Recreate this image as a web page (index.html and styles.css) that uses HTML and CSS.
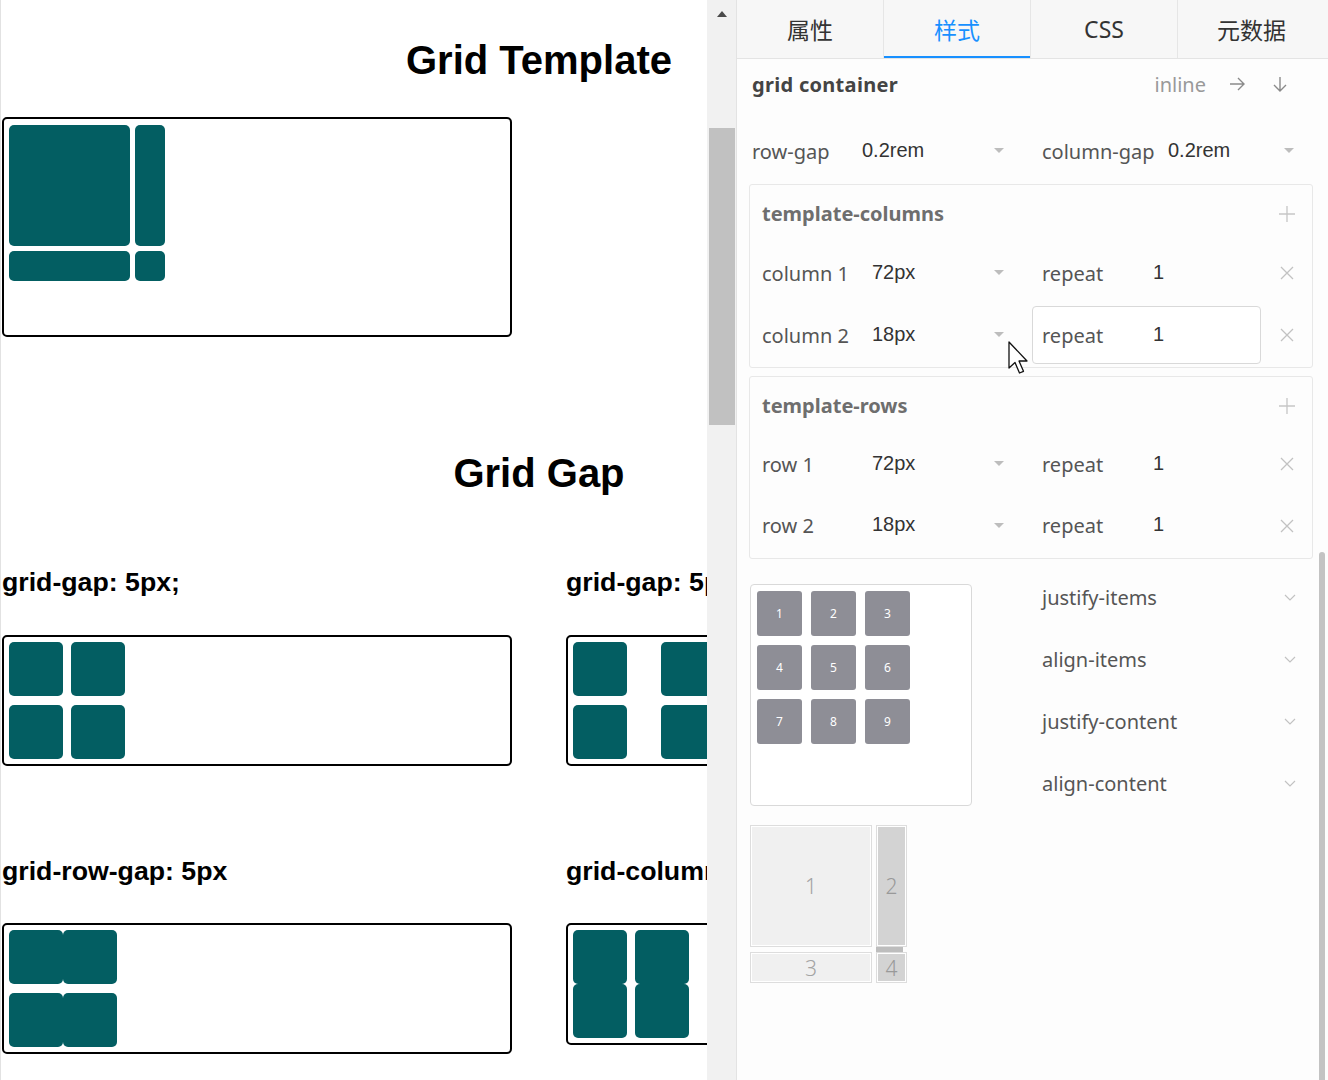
FILE: index.html
```html
<!DOCTYPE html>
<html lang="zh">
<head>
<meta charset="utf-8">
<title>Grid editor</title>
<link rel="stylesheet" href="styles.css">
</head>
<body>
<div class="app">
  <div class="preview">
    <div class="page">
      <h1 class="title t1">Grid Template</h1>
      <div class="demo demo-tpl">
        <div class="it"></div><div class="it"></div><div class="it"></div><div class="it"></div>
      </div>
      <h1 class="title t2">Grid Gap</h1>
      <div class="cases">
        <div class="case">
          <h3 class="case-h">grid-gap: 5px;</h3>
          <div class="demo demo-sq g-a"><div class="it"></div><div class="it"></div><div class="it"></div><div class="it"></div></div>
        </div>
        <div class="case">
          <h3 class="case-h">grid-gap: 5px 20px;</h3>
          <div class="demo demo-sq g-b"><div class="it"></div><div class="it"></div><div class="it"></div><div class="it"></div></div>
        </div>
        <div class="case">
          <h3 class="case-h">grid-row-gap: 5px</h3>
          <div class="demo demo-sq g-c"><div class="it"></div><div class="it"></div><div class="it"></div><div class="it"></div></div>
        </div>
        <div class="case">
          <h3 class="case-h">grid-column-gap: 5px</h3>
          <div class="demo demo-sq g-d"><div class="it"></div><div class="it"></div><div class="it"></div><div class="it"></div></div>
        </div>
      </div>
    </div>
  </div>

  <div class="vscroll">
    <div class="vs-arrow"></div>
    <div class="vs-thumb"></div>
  </div>

  <div class="panel">
    <div class="tabs">
      <div class="tab">属性</div>
      <div class="tab active">样式</div>
      <div class="tab">CSS</div>
      <div class="tab">元数据</div>
    </div>
    <div class="pbody">
      <div class="content">
        <div class="hdr">
          <span class="hdr-t">grid container</span>
          <span class="hdr-inline">inline</span>
          <svg class="ico-arrow" width="16" height="16" viewBox="0 0 16 16"><path d="M1 8H15M9 2L15 8L9 14" fill="none" stroke="#8a8a8a" stroke-width="1.4"/></svg>
          <svg class="ico-arrow ico-down" width="16" height="16" viewBox="0 0 16 16"><path d="M8 1V15M2 9L8 15L14 9" fill="none" stroke="#8a8a8a" stroke-width="1.4"/></svg>
        </div>

        <div class="gaprow">
          <div class="grp grp-l">
            <span class="lbl">row-gap</span>
            <span class="val">0.2rem</span>
            <svg class="caret" width="10" height="6" viewBox="0 0 10 6"><path d="M0 0H10L5 5Z" fill="#bdbdbd"/></svg>
          </div>
          <div class="grp grp-r">
            <span class="lbl lbl-cg">column-gap</span>
            <span class="val">0.2rem</span>
            <svg class="caret" width="10" height="6" viewBox="0 0 10 6"><path d="M0 0H10L5 5Z" fill="#bdbdbd"/></svg>
          </div>
        </div>

        <div class="sect">
          <div class="sect-h">
            <span class="sect-t">template-columns</span>
            <span class="icell"><svg width="18" height="18" viewBox="0 0 18 18"><path d="M9 1V17M1 9H17" fill="none" stroke="#c6c6c6" stroke-width="1.3"/></svg></span>
          </div>
          <div class="srow h60">
            <div class="grp-l2"><span class="lbl">column 1</span><span class="val">72px</span><svg class="caret" width="10" height="6" viewBox="0 0 10 6"><path d="M0 0H10L5 5Z" fill="#bdbdbd"/></svg></div>
            <div class="rep"><span class="lbl rep-l">repeat</span><span class="val">1</span></div>
            <span class="icell"><svg width="14" height="14" viewBox="0 0 14 14"><path d="M1 1L13 13M13 1L1 13" fill="none" stroke="#c2c2c2" stroke-width="1.3"/></svg></span>
          </div>
          <div class="srow h64">
            <div class="grp-l2"><span class="lbl">column 2</span><span class="val">18px</span><svg class="caret" width="10" height="6" viewBox="0 0 10 6"><path d="M0 0H10L5 5Z" fill="#bdbdbd"/></svg></div>
            <div class="rep focus"><span class="lbl rep-l">repeat</span><span class="val">1</span></div>
            <span class="icell"><svg width="14" height="14" viewBox="0 0 14 14"><path d="M1 1L13 13M13 1L1 13" fill="none" stroke="#c2c2c2" stroke-width="1.3"/></svg></span>
          </div>
        </div>

        <div class="sect sect2">
          <div class="sect-h">
            <span class="sect-t">template-rows</span>
            <span class="icell"><svg width="18" height="18" viewBox="0 0 18 18"><path d="M9 1V17M1 9H17" fill="none" stroke="#c6c6c6" stroke-width="1.3"/></svg></span>
          </div>
          <div class="srow h58">
            <div class="grp-l2"><span class="lbl">row 1</span><span class="val">72px</span><svg class="caret" width="10" height="6" viewBox="0 0 10 6"><path d="M0 0H10L5 5Z" fill="#bdbdbd"/></svg></div>
            <div class="rep"><span class="lbl rep-l">repeat</span><span class="val">1</span></div>
            <span class="icell"><svg width="14" height="14" viewBox="0 0 14 14"><path d="M1 1L13 13M13 1L1 13" fill="none" stroke="#c2c2c2" stroke-width="1.3"/></svg></span>
          </div>
          <div class="srow h65">
            <div class="grp-l2"><span class="lbl">row 2</span><span class="val">18px</span><svg class="caret" width="10" height="6" viewBox="0 0 10 6"><path d="M0 0H10L5 5Z" fill="#bdbdbd"/></svg></div>
            <div class="rep"><span class="lbl rep-l">repeat</span><span class="val">1</span></div>
            <span class="icell"><svg width="14" height="14" viewBox="0 0 14 14"><path d="M1 1L13 13M13 1L1 13" fill="none" stroke="#c2c2c2" stroke-width="1.3"/></svg></span>
          </div>
        </div>

        <div class="align">
          <div class="mini">
            <div class="mc">1</div><div class="mc">2</div><div class="mc">3</div>
            <div class="mc">4</div><div class="mc">5</div><div class="mc">6</div>
            <div class="mc">7</div><div class="mc">8</div><div class="mc">9</div>
          </div>
          <div class="props">
            <div class="prop"><span>justify-items</span><svg width="12" height="7" viewBox="0 0 12 7"><path d="M1 1L6 6L11 1" fill="none" stroke="#c2c2c2" stroke-width="1.2"/></svg></div>
            <div class="prop"><span>align-items</span><svg width="12" height="7" viewBox="0 0 12 7"><path d="M1 1L6 6L11 1" fill="none" stroke="#c2c2c2" stroke-width="1.2"/></svg></div>
            <div class="prop"><span>justify-content</span><svg width="12" height="7" viewBox="0 0 12 7"><path d="M1 1L6 6L11 1" fill="none" stroke="#c2c2c2" stroke-width="1.2"/></svg></div>
            <div class="prop"><span>align-content</span><svg width="12" height="7" viewBox="0 0 12 7"><path d="M1 1L6 6L11 1" fill="none" stroke="#c2c2c2" stroke-width="1.2"/></svg></div>
          </div>
        </div>

        <div class="tracks">
          <div class="trk-hl"></div>
          <div class="tc c1">1</div>
          <div class="tc c2">2</div>
          <div class="tc c3">3</div>
          <div class="tc c4">4</div>
        </div>
      </div>
      <div class="pscroll"><div class="ps-thumb"></div></div>
    </div>
  </div>

  <svg class="cursor" width="22" height="34" viewBox="0 0 22 34"><path d="M1 1V27L7 21.5L11.5 32L15.5 30.3L11 20H19Z" fill="#fff" stroke="#111" stroke-width="1.3" stroke-linejoin="round"/></svg>
</div>
</body>
</html>
```
FILE: styles.css
```css
html, body {
  margin: 0;
  padding: 0;
  background: #fff;
}
body {
  width: 1328px;
  height: 1080px;
  overflow: hidden;
}
.app {
  position: relative;
  display: flex;
  width: 1328px;
  height: 1080px;
}

/* ---------- left preview ---------- */
.preview {
  width: 707px;
  flex: none;
  height: 1080px;
  overflow: hidden;
  box-sizing: border-box;
  border-left: 1px solid #e2e2e2;
  background: #fff;
}
.page {
  width: 1074px;
  margin-left: 1px;
  font-family: "Liberation Sans", Arial, sans-serif;
  color: #000;
}
.title {
  margin: 0;
  font-size: 40px;
  line-height: 48px;
  font-weight: bold;
  text-align: center;
}
.t1 { padding-top: 36px; margin-bottom: 33px; }
.t2 { margin-top: 112px; }
.demo {
  width: 510px;
  box-sizing: border-box;
  border: 2px solid #000;
  border-radius: 5px;
  display: grid;
  align-content: start;
  background: #fff;
}
.demo .it {
  background: #035e62;
  border-radius: 5px;
}
.demo-tpl {
  height: 220px;
  padding: 6px 5px;
  grid-template-columns: 121px 30px;
  grid-template-rows: 121px 30px;
  gap: 5px;
}
.cases {
  margin-top: 69px;
  display: grid;
  grid-template-columns: 510px 510px;
  column-gap: 54px;
  row-gap: 89px;
}
.case {
  display: flex;
  flex-direction: column;
}
.case-h {
  margin: 0 0 37px;
  font-size: 26.7px;
  line-height: 32px;
  font-weight: bold;
  white-space: nowrap;
}
.cases .case:nth-child(n+3) .case-h { margin-bottom: 36px; }
.demo-sq {
  padding: 5px;
  grid-template-columns: 54px 54px;
  grid-auto-rows: 54px;
}
.g-a { column-gap: 8px; row-gap: 9px; }
.g-b { column-gap: 34px; row-gap: 9px; }
.g-c { column-gap: 0; row-gap: 9px; }
.g-d { column-gap: 8px; row-gap: 0; }

/* ---------- left scrollbar ---------- */
.vscroll {
  width: 29px;
  flex: none;
  background: #f1f1f1;
  display: flex;
  flex-direction: column;
  align-items: center;
}
.vs-arrow {
  margin-top: 11px;
  width: 0;
  height: 0;
  border-left: 5px solid transparent;
  border-right: 5px solid transparent;
  border-bottom: 6px solid #4a4a4a;
}
.vs-thumb {
  margin-top: 111px;
  width: 26px;
  height: 297px;
  background: #c1c1c1;
}

/* ---------- right panel ---------- */
.panel {
  flex: 1;
  display: flex;
  flex-direction: column;
  border-left: 1px solid #e3e3e3;
  background: #fdfdfd;
  font-family: "Noto Sans", "Noto Sans CJK SC", sans-serif;
  min-width: 0;
}
.tabs {
  display: flex;
  height: 58px;
  background: #f7f7f7;
  border-bottom: 1px solid #e4e4e4;
  flex: none;
}
.tab {
  width: 147px;
  box-sizing: border-box;
  border-right: 1px solid #e6e6e6;
  display: flex;
  align-items: center;
  justify-content: center;
  font-size: 23px;
  color: #333;
  font-family: "Noto Sans", "Noto Sans CJK SC", sans-serif;
}
.tab:last-child { border-right: none; }
.tab.active {
  color: #1890ff;
  box-shadow: inset 0 -2px 0 #1890ff;
}
.pbody {
  flex: 1;
  display: flex;
}
.content {
  width: 581px;
  box-sizing: border-box;
  padding: 0 5px 0 12px;
}
.pscroll {
  flex: 1;
  display: flex;
  flex-direction: column;
}
.ps-thumb {
  margin-top: 493px;
  margin-left: 1px;
  width: 6px;
  flex: 1;
  background: #c3c3c3;
  border-radius: 3px 3px 0 0;
}

.hdr {
  height: 50px;
  display: flex;
  align-items: center;
  padding: 0 25px 0 3px;
}
.hdr-t {
  font-size: 20px;
  font-weight: bold;
  color: #444;
  flex: 1;
  letter-spacing: 0.3px;
}
.hdr-inline {
  font-size: 20px;
  color: #999;
}
.ico-arrow { margin-left: 23px; }
.ico-down { margin-left: 27px; }

.lbl {
  font-size: 20px;
  color: #555;
  flex: none;
}
.val {
  font-family: "Liberation Sans", Arial, sans-serif;
  font-size: 20px;
  color: #333;
  flex: 1;
  position: relative;
  top: -1px;
}
.caret { flex: none; }

.gaprow {
  margin-top: 9px;
  height: 66px;
  display: flex;
  align-items: center;
  padding-left: 3px;
}
.grp {
  display: flex;
  align-items: center;
}
.grp-l {
  width: 260px;
  padding-right: 8px;
  box-sizing: border-box;
}
.grp-l .lbl { width: 110px; }
.grp-r {
  margin-left: 20px;
  padding-left: 10px;
  padding-right: 19px;
  flex: 1;
}
.lbl-cg { width: 126px; }

.sect {
  border: 1px solid #e8e8e8;
  border-radius: 3px;
  background: #fdfdfd;
}
.sect2 { margin-top: 8px; }
.sect-h {
  height: 58px;
  display: flex;
  align-items: center;
  padding-left: 12px;
}
.sect-t {
  flex: 1;
  font-size: 20px;
  font-weight: bold;
  color: #6e6e6e;
  position: relative;
  top: -1px;
}
.icell {
  width: 51px;
  flex: none;
  display: flex;
  justify-content: center;
  align-items: center;
}
.srow {
  display: flex;
  align-items: center;
  padding-left: 12px;
}
.h58 { height: 58px; }
.h60 { height: 60px; }
.h64 { height: 64px; }
.h65 { height: 65px; }
.grp-l2 {
  width: 250px;
  display: flex;
  align-items: center;
  padding-right: 8px;
  box-sizing: border-box;
}
.grp-l2 .lbl { width: 110px; }
.rep {
  margin-left: 20px;
  width: 229px;
  height: 58px;
  box-sizing: border-box;
  border: 1px solid transparent;
  border-radius: 4px;
  display: flex;
  align-items: center;
  padding-left: 9px;
}
.rep.focus {
  border-color: #d9d9d9;
  background: #fff;
}
.rep-l { width: 111px; }

.align {
  margin-top: 7px;
  display: flex;
  align-items: flex-start;
}
.mini {
  margin-top: 18px;
  margin-left: 1px;
  width: 222px;
  height: 222px;
  box-sizing: border-box;
  border: 1px solid #d9d9d9;
  border-radius: 4px;
  padding: 6px;
  background: #fff;
  display: grid;
  grid-template-columns: repeat(3, 45px);
  grid-auto-rows: 45px;
  gap: 9px;
  align-content: start;
}
.mc {
  background: #8e8e96;
  border-radius: 3px;
  color: #fff;
  font-size: 12px;
  display: flex;
  align-items: center;
  justify-content: center;
}
.props {
  margin-left: 60px;
  flex: 1;
}
.prop {
  height: 62px;
  display: flex;
  align-items: center;
  justify-content: space-between;
  padding: 0 17px 0 10px;
  font-size: 20px;
  color: #555;
}

.tracks {
  margin-top: 11px;
  margin-left: 1px;
  display: grid;
  grid-template-columns: 122px 31px;
  grid-template-rows: 122px 31px;
  column-gap: 4px;
  row-gap: 5px;
}
.trk-hl {
  grid-column: 2;
  grid-row: 1 / 3;
  background: #bdbdbd;
  margin: 0 4px 0 0;
}
.tc {
  box-sizing: border-box;
  border: 1px solid #dddddd;
  box-shadow: inset 0 0 0 1px #fff;
  background: #f0f0f0;
  color: #a3a3a3;
  font-size: 21px;
  font-weight: 300;
  display: flex;
  align-items: center;
  justify-content: center;
}
.c1 { grid-column: 1; grid-row: 1; }
.c2 { grid-column: 2; grid-row: 1; background: #d3d3d3; color: #999; }
.c3 { grid-column: 1; grid-row: 2; }
.c4 { grid-column: 2; grid-row: 2; background: #d3d3d3; color: #999; }

.cursor {
  position: absolute;
  left: 1008px;
  top: 341px;
}
```
